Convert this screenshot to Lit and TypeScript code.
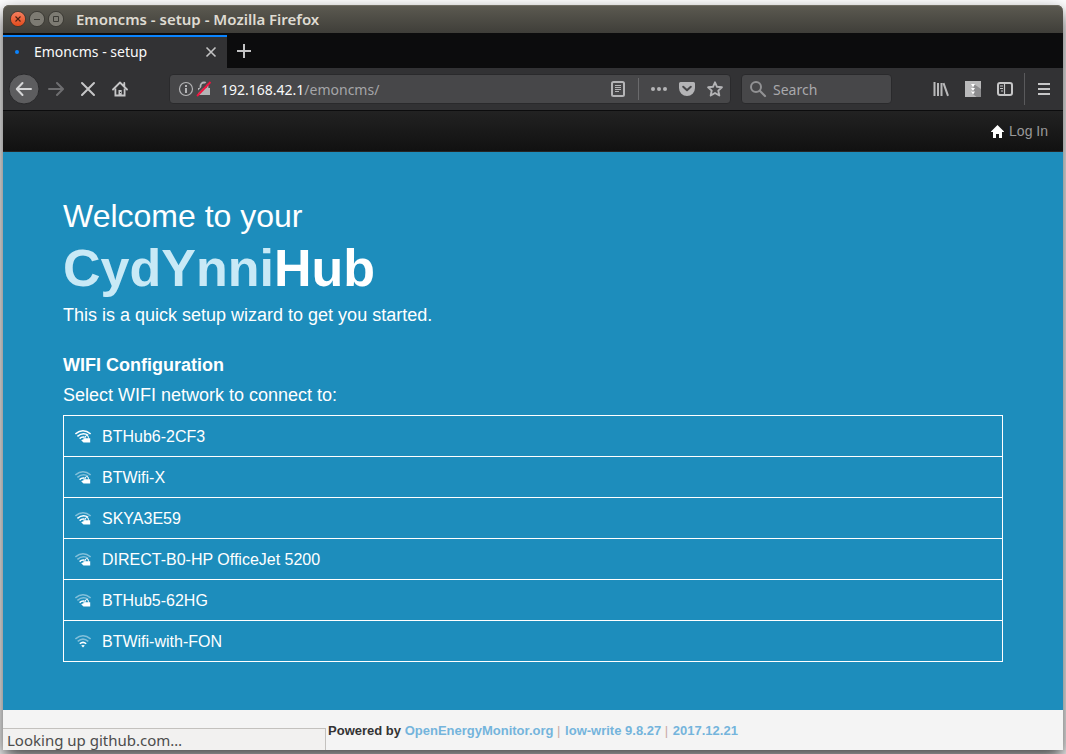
import { LitElement, html, css, svg } from "lit";
import { customElement, property } from "lit/decorators.js";
import { classMap } from "lit/directives/class-map.js";

interface Network {
  name: string;
  strength: number;
  secure: boolean;
}

const NETWORKS: Network[] = [
  { name: "BTHub6-2CF3", strength: 3, secure: true },
  { name: "BTWifi-X", strength: 1, secure: true },
  { name: "SKYA3E59", strength: 2, secure: true },
  { name: "DIRECT-B0-HP OfficeJet 5200", strength: 1, secure: true },
  { name: "BTHub5-62HG", strength: 1, secure: true },
  { name: "BTWifi-with-FON", strength: 1, secure: false },
];

@customElement("wifi-icon")
class WifiIcon extends LitElement {
  @property({ type: Number }) strength = 3;
  @property({ type: Boolean }) secure = false;

  static styles = css`
    :host { display: block; width: 16px; height: 16px; }
    svg { display: block; }
    .arc { fill: none; stroke: #fff; stroke-width: 1.5; }
    .weak { opacity: 0.45; }
    .solid { fill: #fff; }
    .shackle { fill: none; stroke: #fff; stroke-width: 1; }
  `;

  render() {
    const arc = (d: string, level: number) =>
      svg`<path class=${classMap({ arc: true, weak: this.strength < level })} d=${d} />`;
    return html`<svg width="16" height="16" viewBox="0 0 16 16" aria-hidden="true">
      ${arc("M0.4 6 Q8 -0.4 15.6 6", 3)}
      ${arc(this.secure ? "M2.4 8.4 Q8 3.8 13.2 7.4" : "M2.7 8.4 Q8 3.8 13.3 8.4", 2)}
      ${arc(this.secure ? "M4.6 10.6 Q7 8.4 9.6 9.2" : "M4.8 10.8 Q8 8 11.2 10.8", 1)}
      ${this.secure
        ? svg`<path class="solid" d="M6.2 12.2 Q7.400 11 9 11.600 V14.200H8.200z M8.400 10.200h6.800v4.400H8.400z" />
            <path class="shackle" d="M10.200 10.600V9.200a1.600 1.600 0 0 1 3.200 0V10.600" />`
        : svg`<path class="solid" d="M6.200 12.600 Q8 11.200 9.800 12.600 L8 14.400Z" />`}
    </svg>`;
  }
}

@customElement("browser-chrome")
class BrowserChrome extends LitElement {
  static styles = css`
    :host { display: block; font-family: "Noto Sans", "Open Sans", sans-serif; font-size: 14px; color: #f9f9fa; }
    button, input { font: inherit; color: inherit; background: none; border: 0; padding: 0; margin: 0; }
    svg { display: block; }
    .title {
      height: 28px; display: flex; align-items: center; gap: 3px; padding-left: 7px;
      background: linear-gradient(#5c5a51, #3f3e39); border-radius: 6px 6px 0 0;
      box-shadow: inset 0 1px #6f6c61;
    }
    .title h1 { margin: 0 0 0 9px; font-size: 15px; font-weight: 600; color: #dfdbd2; line-height: 28px; }
    .tabs { height: 35px; display: flex; align-items: stretch; background: #0c0c0d; }
    .tab {
      width: 224px; box-sizing: border-box; margin-top: 2px; border-top: 2px solid #0a84ff;
      background: #323234; display: flex; align-items: center; padding: 0 10px 2px 12px;
    }
    .dot { width: 4px; height: 4px; border-radius: 50%; background: #0a84ff; margin-right: 15px; }
    .tab span { flex: 1; }
    .add { width: 34px; display: grid; place-items: center; }
    .bar {
      height: 42px; box-sizing: border-box; display: flex; align-items: center; padding: 0 3px 0 5px;
      background: #323234;
    }
    .tool { width: 32px; height: 32px; display: grid; place-items: center; flex: none; }
    .field {
      display: flex; align-items: center; height: 30px; box-sizing: border-box; background: #474749;
      border: 1px solid #2a2a2c; border-radius: 4px; min-width: 0;
    }
    .url { flex: 1; margin-left: 33px; padding: 0 7px 0 8px; }
    .url label { padding-left: 9px; }
    .url input { flex: 1; min-width: 0; color: #a5a5a8; }
    .url .lock { margin-left: 2px; }
    .rule { width: 1px; height: 22px; background: #6a6a6c; margin: 0 12px; }
    .page-actions { display: flex; align-items: center; gap: 12px; }
    .search { width: 151px; margin: 0 33px 0 10px; padding-left: 7px; gap: 6px; }
    .search input { width: 100px; }
    .search input::placeholder { color: #a9a9ac; opacity: 1; }
    .divider { width: 1px; height: 32px; background: #5a5a5c; margin: 0 3px; }
  `;

  render() {
    return html`
      <header class="title">
        <button aria-label="Close window"><svg width="16" height="16" viewBox="0 0 16 16">
          <defs><linearGradient id="r" x2="0" y2="1"><stop stop-color="#f58161" /><stop offset="1" stop-color="#e2491a" /></linearGradient></defs>
          <circle cx="8" cy="8" r="7.6" fill="url(#r)" stroke="#33322d" stroke-width=".8" />
          <path d="M5.5 5.5l5 5m0-5l-5 5" stroke="#4a2013" stroke-width="1.1" /></svg></button>
        <button aria-label="Minimise"><svg width="16" height="16" viewBox="0 0 16 16">
          <circle cx="8" cy="8" r="7.6" fill="#7d7b73" stroke="#33322d" stroke-width=".8" />
          <path d="M5 8.500h6" stroke="#3b3a35" /></svg></button>
        <button aria-label="Maximise"><svg width="16" height="16" viewBox="0 0 16 16">
          <circle cx="8" cy="8" r="7.6" fill="#7d7b73" stroke="#33322d" stroke-width=".8" />
          <path d="M5.500 5.500h5v5h-5z" fill="none" stroke="#3b3a35" /></svg></button>
        <h1>Emoncms - setup - Mozilla Firefox</h1>
      </header>
      <div class="tabs">
        <div class="tab">
          <i class="dot"></i><span>Emoncms - setup</span>
          <button aria-label="Close tab"><svg width="12" height="12" viewBox="0 0 12 12">
            <path d="M1.5 1.5l9 9m0-9l-9 9" stroke="#c3c3c4" stroke-width="1.6" /></svg></button>
        </div>
        <button class="add" aria-label="New tab"><svg width="16" height="16" viewBox="0 0 16 16">
          <path d="M8 1v14M1 8h14" stroke="#c3c3c4" stroke-width="2" /></svg></button>
      </div>
      <nav class="bar">
        <button class="tool" aria-label="Back"><svg width="32" height="32" viewBox="0 0 32 32">
          <circle cx="16" cy="16" r="15" fill="#5d5d5f" stroke="#29292b" />
          <path d="M23 16H9.500M14.500 10L8.800 16l5.700 6" fill="none" stroke="#d6d6d7" stroke-width="2" stroke-linecap="round" stroke-linejoin="round" /></svg></button>
        <button class="tool" aria-label="Forward"><svg width="16" height="16" viewBox="0 0 16 16">
          <path d="M1 8h13M9 2l6 6-6 6" fill="none" stroke="#6e6e70" stroke-width="2" stroke-linecap="round" stroke-linejoin="round" /></svg></button>
        <button class="tool" aria-label="Stop"><svg width="16" height="16" viewBox="0 0 16 16">
          <path d="M2 2l12 12M14 2L2 14" stroke="#c6c6c7" stroke-width="2" stroke-linecap="round" /></svg></button>
        <button class="tool" aria-label="Home"><svg width="16" height="16" viewBox="0 0 16 16">
          <path d="M1 8.500L8 1.500l7 7M12.300 2v3" fill="none" stroke="#c6c6c7" stroke-width="1.800" stroke-linecap="round" stroke-linejoin="round" />
          <path d="M3.400 7.500V14.500h9.200V7.500" fill="none" stroke="#c6c6c7" stroke-width="1.800" />
          <path d="M6.500 9h3.200v5.500H6.500z" fill="#c6c6c7" /><path d="M8 11h1v1H8z" fill="#323234" /></svg></button>
        <div class="field url">
          <svg width="16" height="16" viewBox="0 0 16 16"><circle cx="8" cy="8" r="6.500" fill="none" stroke="#b4b4b6" stroke-width="1.200" />
            <path d="M7 4h2v2H7zM7 7h2v5H7z" fill="#b4b4b6" /></svg>
          <svg class="lock" width="16" height="16" viewBox="0 0 16 16">
            <path d="M2 7h12v7H2z" fill="#b4b4b6" /><path d="M4.500 7V5a3.500 3.500 0 0 1 7 0v2" fill="none" stroke="#b4b4b6" stroke-width="1.800" />
            <path d="M0 13L12 1" stroke="#474749" stroke-width="2" /><path d="M1 15L14.500 1" stroke="#f0143f" stroke-width="1.900" /></svg>
          <label for="path">192.168.42.1</label><input id="path" value="/emoncms/" />
          <button aria-label="Reader view"><svg width="16" height="16" viewBox="0 0 16 16">
            <rect x="2" y="1" width="12" height="14" rx="1.500" fill="none" stroke="#b4b4b6" stroke-width="2" />
            <path d="M5 4.500h6M5 6.500h6M5 8.500h6M5 10.500h4" stroke="#b4b4b6" /></svg></button>
          <i class="rule"></i>
          <div class="page-actions">
            <button aria-label="Page actions"><svg width="16" height="16" viewBox="0 0 16 16" fill="#b4b4b6">
              <circle cx="2" cy="8" r="2" /><circle cx="8" cy="8" r="2" /><circle cx="14" cy="8" r="2" /></svg></button>
            <button aria-label="Save to Pocket"><svg width="16" height="16" viewBox="0 0 16 16">
              <path d="M1.500 1h13A1.500 1.500 0 0 1 16 2.500V7A8 8 0 0 1 0 7V2.500A1.500 1.500 0 0 1 1.500 1z" fill="#b4b4b6" />
              <path d="M4.200 5.700L8 9.300l3.800-3.600" fill="none" stroke="#474749" stroke-width="2" stroke-linecap="round" stroke-linejoin="round" /></svg></button>
            <button aria-label="Bookmark"><svg width="16" height="16" viewBox="0 0 16 16">
              <path d="M8 1.300l2 4.500 4.900.5-3.600 3.300 1 4.900L8 12l-4.300 2.500 1-4.900L1.100 6.300 6 5.800z" fill="none" stroke="#b4b4b6" stroke-width="1.900" stroke-linejoin="round" /></svg></button>
          </div>
        </div>
        <div class="field search">
          <svg width="18" height="18" viewBox="0 0 18 18"><circle cx="7" cy="7" r="5" fill="none" stroke="#929294" stroke-width="2" />
            <path d="M10.800 10.800L16 16" stroke="#929294" stroke-width="2.200" stroke-linecap="round" /></svg>
          <input type="search" aria-label="Search" placeholder="Search" />
        </div>
        <button class="tool" aria-label="Library"><svg width="16" height="16" viewBox="0 0 16 16">
          <path d="M1.500 1v14M5 2v13M8.500 2v13M10.500 2.200L15 14.800" stroke="#b9b9ba" stroke-width="2" /></svg></button>
        <button class="tool" aria-label="Downloader"><svg width="16" height="16" viewBox="0 0 16 16">
          <path d="M0 0h16v16H0z" fill="#b9b9ba" /><path d="M9.500 3.500L16 8v8h-4.500L6.500 12z" fill="#8c8c8e" />
          <path d="M6 3h4L8 6zM6 7h4L8 10zM6 10.500h4L8 13.500z" fill="#fff" /></svg></button>
        <button class="tool" aria-label="Sidebar"><svg width="16" height="16" viewBox="0 0 16 16">
          <rect x="1" y="2" width="14" height="12" rx="2" fill="none" stroke="#c6c6c7" stroke-width="2" />
          <path d="M7.500 2v12M3 5h3M3 7.500h3M4 10h2" stroke="#c6c6c7" stroke-width="1.200" /></svg></button>
        <i class="divider"></i>
        <button class="tool" aria-label="Menu"><svg width="16" height="16" viewBox="0 0 16 16">
          <path d="M2 3h12M2 8h12M2 13h12" stroke="#c6c6c7" stroke-width="2" /></svg></button>
      </nav>
    `;
  }
}

@customElement("app-root")
class AppRoot extends LitElement {
  static styles = css`
    :host {
      display: flex; flex-direction: column; min-height: 100vh; box-sizing: border-box; padding: 5px 3px 4px;
      background: #fff; overflow: hidden; font-family: "Liberation Sans", Arial, sans-serif;
    }
    .window {
      flex: 1; display: flex; flex-direction: column; position: relative; border-radius: 6px 6px 0 0;
      box-shadow: 0 8px 18px rgba(0, 0, 0, 0.75);
    }
    .navbar {
      height: 42px; box-sizing: border-box; border-top: 1px solid #0c0c0d; border-bottom: 1px solid #252525;
      background: linear-gradient(#222, #111); display: flex; justify-content: flex-end; align-items: center;
      padding-right: 15px;
    }
    .login { display: flex; align-items: center; gap: 5px; color: #999; font-size: 14px; line-height: 20px; text-decoration: none; }
    main { flex: 1; background: #1d8dbc; color: #fff; padding: 44px 60px 48px; }
    h1, h2, p, ul { margin: 0; padding: 0; }
    h1 { font-weight: 400; font-size: 32px; line-height: 40px; }
    .brand { display: block; font-weight: 700; font-size: 52px; line-height: 64px; }
    .brand span { color: #c8e9f6; }
    p, h2 { font-size: 18px; line-height: 30px; }
    h2 { font-weight: 700; margin-top: 20px; }
    ul { list-style: none; border: 1px solid #fff; margin-top: 5px; }
    li + li { border-top: 1px solid #fff; }
    .network {
      display: flex; align-items: center; gap: 11px; width: 100%; height: 40px; padding: 2px 11px 0; border: 0;
      background: none; color: inherit; font: 16px/20px "Liberation Sans", Arial, sans-serif; text-align: left; cursor: pointer;
    }
    wifi-icon { margin-bottom: 2px; }
    footer {
      height: 40px; box-sizing: border-box; padding-top: 1px; background: #f4f4f4; color: #333; font-size: 13px;
      font-weight: 700; line-height: 40px; text-align: center;
    }
    footer a, footer span { color: #74b4dc; text-decoration: none; }
    footer .sep { color: #c9a9a4; font-weight: 400; margin: 0 1px 0 0; }
    .status {
      position: absolute; left: 0; bottom: 0; width: 323px; height: 22px; box-sizing: border-box; padding-left: 4px;
      background: #f2f1f0; border: 1px solid #c3c1be; border-width: 1px 1px 0 0; color: #4c4c4c;
      font: 15px/22px "Noto Sans", "Open Sans", sans-serif;
    }
  `;

  render() {
    return html`
      <div class="window">
        <browser-chrome></browser-chrome>
        <div class="navbar">
          <a class="login" href="#login"><svg width="13" height="13" viewBox="0 0 13 13" aria-hidden="true">
            <path d="M6.500 0L13 6.500V7H11v6H8V9H5v4H2V7H0V6.500z" fill="#fff" /></svg>Log In</a>
        </div>
        <main>
          <h1>Welcome to your <strong class="brand"><span>CydYnni</span>Hub</strong></h1>
          <p>This is a quick setup wizard to get you started.</p>
          <h2>WIFI Configuration</h2>
          <p>Select WIFI network to connect to:</p>
          <ul>
            ${NETWORKS.map(
              (n) => html`<li><button class="network">
                <wifi-icon .strength=${n.strength} .secure=${n.secure}></wifi-icon>${n.name}
              </button></li>`
            )}
          </ul>
        </main>
        <footer>
          Powered by <a href="#oem">OpenEnergyMonitor.org</a> <span class="sep">|</span>
          <span>low-write 9.8.27</span> <span class="sep">|</span> <span>2017.12.21</span>
        </footer>
        <div class="status" role="status">Looking up github.com…</div>
      </div>
    `;
  }
}
